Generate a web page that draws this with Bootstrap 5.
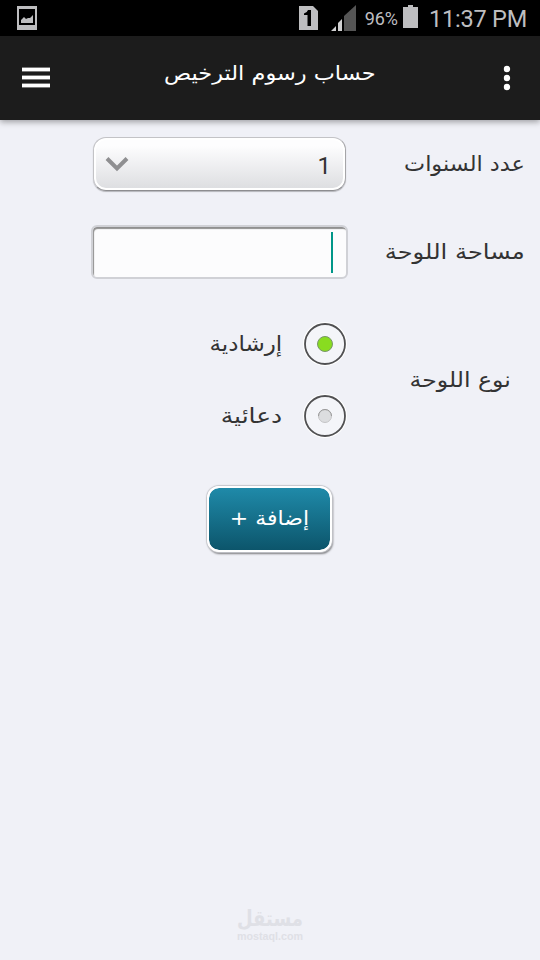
<!DOCTYPE html>
<html lang="ar" dir="ltr">
<head>
<meta charset="utf-8">
<meta name="viewport" content="width=device-width, initial-scale=1">
<title>حساب رسوم الترخيص</title>
<link rel="stylesheet" href="https://cdn.jsdelivr.net/npm/bootstrap@5.3.0/dist/css/bootstrap.min.css">
<style>
html, body { height: 960px; overflow: hidden; }
body { background: #f0f1f7; color: #333; font-family: "DejaVu Sans", sans-serif; font-size: 20px; line-height: 1.5; }
.status-strip { height: 36px; background: #000; color: #bebec0; font-family: Roboto, sans-serif; padding: 0 13px 0 17px; }
.signal { margin-left: 13px; }
.battery-text { font-size: 18px; line-height: 36px; margin: 2px 5px 0 9px; }
.battery { margin-top: -3px; }
.clock { font-size: 23.500px; line-height: 36px; margin: 2px 0 0 11px; white-space: nowrap; letter-spacing: -.22px; }
.app-header { height: 84px; background: #1c1c1c; color: #fff; padding: 0 29px 0 22px; box-shadow: 0 2px 6px rgba(0,0,0,.35); }
.app-title { font-size: 20px; margin: 0 0 11px 0; }
.form-area { padding: 17px 15px 0 91px; height: 806px; }
.control-col { width: 257px; flex: none; }
.select-box { width: 253px; height: 54px; margin-left: 2px; border: 1px solid #c3c3c6; border-bottom-color: #8d8d90; border-right-color: #a5a5a8; border-radius: 13px; background: linear-gradient(#fdfdfe 15%, #dcdde0) padding-box; box-shadow: inset 0 0 0 2px #fff, 0 1px 1px rgba(0,0,0,.25); padding: 0 14px 0 11px; font: 24px Roboto, sans-serif; }
.select-value { padding-top: 4px; }
.input-row { margin-top: 34px; }
.input-box { width: 257px; height: 54px; border: 2px solid #d0d1d6; border-radius: 6px; background: #fcfcfd; box-shadow: inset 1px 2px 1px #909090; padding: 5px 13px 0 0; }
.caret { width: 2px; height: 41px; background: #009688; }
.type-row { margin-top: 41px; padding-right: 14px; }
.radio-row { height: 48px; width: 256px; }
.radio-label { margin-right: 21px; }
.add-btn, .add-btn:hover { width: 125px; height: 66px; margin: 46px 0 0 116px; border: 2px solid #fff; border-radius: 12px; color: #fff; font-size: 20px; background: linear-gradient(#1f8aa9, #0c556b) padding-box; box-shadow: 0 0 1px 1px #c5c6cb, 1px 2px 2px rgba(0,0,0,.5); padding: 0 0 2px; white-space: nowrap; }
.fit { display: inline-block; white-space: nowrap; transform-origin: right center; }
.fit-title { transform: translateX(5px) scaleX(1.122); }
.fit-years { transform: scale(1.12, 1.06); }
.fit-area { transform: scale(1.21, 1.06); }
.fit-guide { transform: scale(1.15, 1.06); }
.fit-promo { transform: scale(1.25, 1.06); }
.fit-type { transform: scale(1.18, 1.06); }
.fit-add { transform: translateX(4px) scaleX(1.1); }
.watermark { color: #dfe0e6; line-height: 1; height: 34px; margin-top: -18px; }
.wm-ar { font-size: 22px; height: 22px; font-weight: 700; transform: scaleX(.82); }
.wm-en { font: 700 10.700px/12px "Liberation Sans", sans-serif; }
</style>
<script src="https://cdn.jsdelivr.net/npm/bootstrap@5.3.0/dist/js/bootstrap.bundle.min.js"></script>
</head>
<body>
<div class="status-strip d-flex align-items-center">
  <svg width="20" height="24" viewBox="0 0 20 24"><path fill="#bebec0" fill-rule="evenodd" d="M0 0h20v24H0zM2 3v16h16V3z"/><path fill="#bebec0" d="M4 17v-3l3-3 2 2 2-1 2 0 3-3v8z"/></svg>
  <svg class="ms-auto" width="19" height="24" viewBox="0 0 19 24"><path fill="#bebec0" d="M0 0h14l5 5v19H0z"/><path fill="#000" d="M5 7.500Q8 7 9 4h3v16H8.500V9H5z"/></svg>
  <svg class="signal" width="25" height="26" viewBox="0 0 25 26"><path fill="#555" d="M13 11L25 0v26H13z"/><path fill="#d0d0d1" d="M0 26l5-5v5zM7 18l4-4v12H7z"/></svg>
  <span class="battery-text">96%</span>
  <svg class="battery" width="15" height="23" viewBox="0 0 15 23"><path fill="#bebec0" d="M5 0h5v2h5v21H0V2h5z"/></svg>
  <span class="clock">11:37 PM</span>
</div>
<header class="app-header d-flex align-items-center justify-content-between position-relative">
  <svg width="28" height="22" viewBox="0 0 28 22"><path stroke="#777" stroke-width="5" d="M0 2.500h28M0 10.500h28M0 18.500h28"/><path stroke="#fff" stroke-width="3" d="M0 2.500h28M0 10.500h28M0 18.500h28"/></svg>
  <h1 class="app-title" dir="rtl"><span class="fit fit-title">حساب رسوم الترخيص</span></h1>
  <svg width="8" height="26" viewBox="0 0 8 26"><g fill="#fff"><circle cx="4" cy="4" r="3.2"/><circle cx="4" cy="13" r="3.2"/><circle cx="4" cy="22" r="3.2"/></g></svg>
</header>
<main class="form-area">
  <div class="d-flex justify-content-between align-items-center">
    <div class="control-col"><div class="select-box d-flex align-items-center justify-content-between">
      <svg width="24" height="16" viewBox="0 0 24 16"><path fill="none" stroke="#8f8f91" stroke-width="4" d="M2 2.500l10 10 10-10"/></svg><span class="select-value">1</span></div></div>
    <span class="fit fit-years" dir="rtl">عدد السنوات</span>
  </div>
  <div class="input-row d-flex justify-content-between align-items-center">
    <div class="control-col"><div class="input-box d-flex justify-content-end"><span class="caret"></span></div></div>
    <span class="fit fit-area" dir="rtl">مساحة اللوحة</span>
  </div>
  <div class="type-row d-flex justify-content-between align-items-center">
    <div class="control-col d-flex flex-column gap-4">
      <div class="radio-row d-flex align-items-center justify-content-end">
        <span class="radio-label fit fit-guide" dir="rtl">إرشادية</span>
        <svg width="44" height="44" viewBox="0 0 44 44"><circle cx="22" cy="22" r="21" fill="#f4f5f9" stroke="#fff" stroke-width="2"/><circle cx="22" cy="22" r="20" fill="none" stroke="#505052" stroke-width="1.8"/><circle cx="22" cy="22" r="7.5" fill="#89dc20" stroke="#79966a"/></svg>
      </div>
      <div class="radio-row d-flex align-items-center justify-content-end">
        <span class="radio-label fit fit-promo" dir="rtl">دعائية</span>
        <svg width="44" height="44" viewBox="0 0 44 44"><circle cx="22" cy="22" r="21" fill="#f4f5f9" stroke="#fff" stroke-width="2"/><circle cx="22" cy="22" r="20" fill="none" stroke="#505052" stroke-width="1.8"/><circle cx="22" cy="22" r="6.5" fill="#dcdddf" stroke="#c4c4c6"/><path fill="none" stroke="#999" d="M15.500 22a6.500 6.500 0 0 1 13 0"/></svg>
      </div>
    </div>
    <span class="fit fit-type" dir="rtl">نوع اللوحة</span>
  </div>
  <button class="btn add-btn" dir="rtl"><span class="fit fit-add">إضافة +</span></button>
</main>
<footer class="watermark text-center"><div class="wm-ar" dir="rtl">مستقل</div><div class="wm-en">mostaql.com</div></footer>
</body>
</html>
